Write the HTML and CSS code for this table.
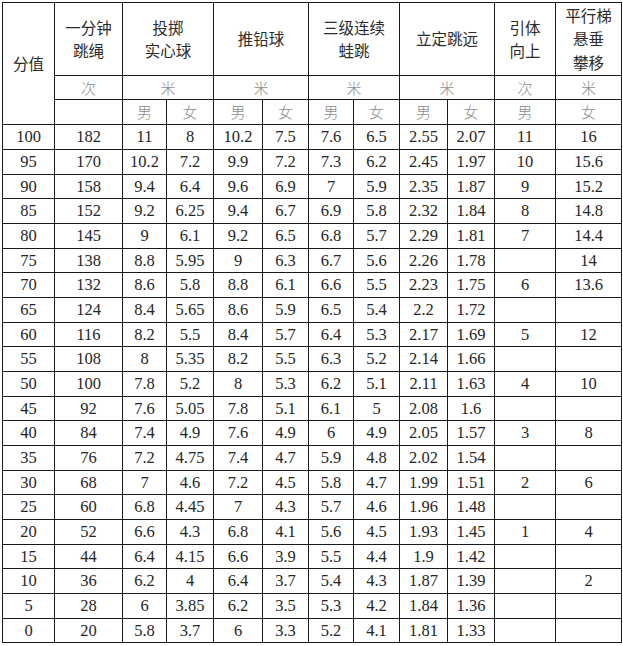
FILE: index.html
```html
<!DOCTYPE html>
<html>
<head>
<meta charset="utf-8">
<title>分值表</title>
<link rel="stylesheet" href="styles.css">
</head>
<body>
<table class="score">
  <colgroup>
    <col class="c1"><col class="c2"><col class="c3"><col class="c4"><col class="c5"><col class="c6">
    <col class="c7"><col class="c8"><col class="c9"><col class="c10"><col class="c11"><col class="c12">
  </colgroup>
  <thead>
    <tr class="hrow">
      <th rowspan="3" class="score-head">分值</th>
      <th>一分钟<br>跳绳</th>
      <th colspan="2">投掷<br>实心球</th>
      <th colspan="2">推铅球</th>
      <th colspan="2">三级连续<br>蛙跳</th>
      <th colspan="2">立定跳远</th>
      <th>引体<br>向上</th>
      <th>平行梯<br>悬垂<br>攀移</th>
    </tr>
    <tr class="urow">
      <td class="unit">次</td>
      <td class="unit" colspan="2">米</td>
      <td class="unit" colspan="2">米</td>
      <td class="unit" colspan="2">米</td>
      <td class="unit" colspan="2">米</td>
      <td class="unit">次</td>
      <td class="unit">米</td>
    </tr>
    <tr class="grow">
      <td class="unit"></td>
      <td class="unit">男</td><td class="unit">女</td>
      <td class="unit">男</td><td class="unit">女</td>
      <td class="unit">男</td><td class="unit">女</td>
      <td class="unit">男</td><td class="unit">女</td>
      <td class="unit">男</td>
      <td class="unit">女</td>
    </tr>
  </thead>
  <tbody class="num">
    <tr class="r1 first"><td>100</td><td>182</td><td>11</td><td>8</td><td>10.2</td><td>7.5</td><td>7.6</td><td>6.5</td><td>2.55</td><td>2.07</td><td>11</td><td>16</td></tr>
    <tr class="r2"><td>95</td><td>170</td><td>10.2</td><td>7.2</td><td>9.9</td><td>7.2</td><td>7.3</td><td>6.2</td><td>2.45</td><td>1.97</td><td>10</td><td>15.6</td></tr>
    <tr class="r3"><td>90</td><td>158</td><td>9.4</td><td>6.4</td><td>9.6</td><td>6.9</td><td>7</td><td>5.9</td><td>2.35</td><td>1.87</td><td>9</td><td>15.2</td></tr>
    <tr class="r1"><td>85</td><td>152</td><td>9.2</td><td>6.25</td><td>9.4</td><td>6.7</td><td>6.9</td><td>5.8</td><td>2.32</td><td>1.84</td><td>8</td><td>14.8</td></tr>
    <tr class="r2"><td>80</td><td>145</td><td>9</td><td>6.1</td><td>9.2</td><td>6.5</td><td>6.8</td><td>5.7</td><td>2.29</td><td>1.81</td><td>7</td><td>14.4</td></tr>
    <tr class="r3"><td>75</td><td>138</td><td>8.8</td><td>5.95</td><td>9</td><td>6.3</td><td>6.7</td><td>5.6</td><td>2.26</td><td>1.78</td><td></td><td>14</td></tr>
    <tr class="r1"><td>70</td><td>132</td><td>8.6</td><td>5.8</td><td>8.8</td><td>6.1</td><td>6.6</td><td>5.5</td><td>2.23</td><td>1.75</td><td>6</td><td>13.6</td></tr>
    <tr class="r2"><td>65</td><td>124</td><td>8.4</td><td>5.65</td><td>8.6</td><td>5.9</td><td>6.5</td><td>5.4</td><td>2.2</td><td>1.72</td><td></td><td></td></tr>
    <tr class="r3"><td>60</td><td>116</td><td>8.2</td><td>5.5</td><td>8.4</td><td>5.7</td><td>6.4</td><td>5.3</td><td>2.17</td><td>1.69</td><td>5</td><td>12</td></tr>
    <tr class="r1"><td>55</td><td>108</td><td>8</td><td>5.35</td><td>8.2</td><td>5.5</td><td>6.3</td><td>5.2</td><td>2.14</td><td>1.66</td><td></td><td></td></tr>
    <tr class="r2"><td>50</td><td>100</td><td>7.8</td><td>5.2</td><td>8</td><td>5.3</td><td>6.2</td><td>5.1</td><td>2.11</td><td>1.63</td><td>4</td><td>10</td></tr>
    <tr class="r3"><td>45</td><td>92</td><td>7.6</td><td>5.05</td><td>7.8</td><td>5.1</td><td>6.1</td><td>5</td><td>2.08</td><td>1.6</td><td></td><td></td></tr>
    <tr class="r1"><td>40</td><td>84</td><td>7.4</td><td>4.9</td><td>7.6</td><td>4.9</td><td>6</td><td>4.9</td><td>2.05</td><td>1.57</td><td>3</td><td>8</td></tr>
    <tr class="r2"><td>35</td><td>76</td><td>7.2</td><td>4.75</td><td>7.4</td><td>4.7</td><td>5.9</td><td>4.8</td><td>2.02</td><td>1.54</td><td></td><td></td></tr>
    <tr class="r3"><td>30</td><td>68</td><td>7</td><td>4.6</td><td>7.2</td><td>4.5</td><td>5.8</td><td>4.7</td><td>1.99</td><td>1.51</td><td>2</td><td>6</td></tr>
    <tr class="r1"><td>25</td><td>60</td><td>6.8</td><td>4.45</td><td>7</td><td>4.3</td><td>5.7</td><td>4.6</td><td>1.96</td><td>1.48</td><td></td><td></td></tr>
    <tr class="r2"><td>20</td><td>52</td><td>6.6</td><td>4.3</td><td>6.8</td><td>4.1</td><td>5.6</td><td>4.5</td><td>1.93</td><td>1.45</td><td>1</td><td>4</td></tr>
    <tr class="r3"><td>15</td><td>44</td><td>6.4</td><td>4.15</td><td>6.6</td><td>3.9</td><td>5.5</td><td>4.4</td><td>1.9</td><td>1.42</td><td></td><td></td></tr>
    <tr class="r1"><td>10</td><td>36</td><td>6.2</td><td>4</td><td>6.4</td><td>3.7</td><td>5.4</td><td>4.3</td><td>1.87</td><td>1.39</td><td></td><td>2</td></tr>
    <tr class="r2"><td>5</td><td>28</td><td>6</td><td>3.85</td><td>6.2</td><td>3.5</td><td>5.3</td><td>4.2</td><td>1.84</td><td>1.36</td><td></td><td></td></tr>
    <tr class="r3"><td>0</td><td>20</td><td>5.8</td><td>3.7</td><td>6</td><td>3.3</td><td>5.2</td><td>4.1</td><td>1.81</td><td>1.33</td><td></td><td></td></tr>
  </tbody>
</table>
</body>
</html>
```
FILE: styles.css
```css
html, body {
  margin: 0;
  padding: 0;
  background: #ffffff;
}

body {
  padding: 2px 0 0 2px;
}

.score {
  border-collapse: collapse;
  table-layout: fixed;
  width: 620px;
  color: #2a2a2a;
}

.c1 { width: 52px; }
.c2 { width: 68px; }
.c3 { width: 44px; }
.c4 { width: 47px; }
.c5 { width: 49px; }
.c6 { width: 46px; }
.c7 { width: 45px; }
.c8 { width: 46px; }
.c9 { width: 48px; }
.c10 { width: 47px; }
.c11 { width: 61px; }
.c12 { width: 66px; }

.score th,
.score td {
  border: 1px solid #1a1a1a;
  padding: 0;
  text-align: center;
  vertical-align: middle;
  white-space: nowrap;
}

.num td {
  font-family: "Liberation Serif", "Times New Roman", serif;
  font-size: 16.5px;
  color: #262626;
}

.score th {
  font-family: "Noto Sans CJK SC", "Noto Sans", sans-serif;
  font-weight: 400;
  font-size: 15.5px;
  line-height: 23.5px;
  color: #2b2b2b;
}

.score-head {
  padding-top: 2px;
}

.hrow { height: 73px; }
.urow { height: 24px; }
.grow { height: 25px; }

.score td.unit {
  font-family: "Noto Sans CJK SC", "Noto Sans", sans-serif;
  font-weight: 300;
  font-size: 15px;
  color: #8c8c8c;
  line-height: 20px;
}

.r1 { height: 25px; }
.r2 { height: 25px; }
.r3 { height: 24px; }

.first td:first-child {
  border-top: 1px dotted #9a9a9a;
}
```
